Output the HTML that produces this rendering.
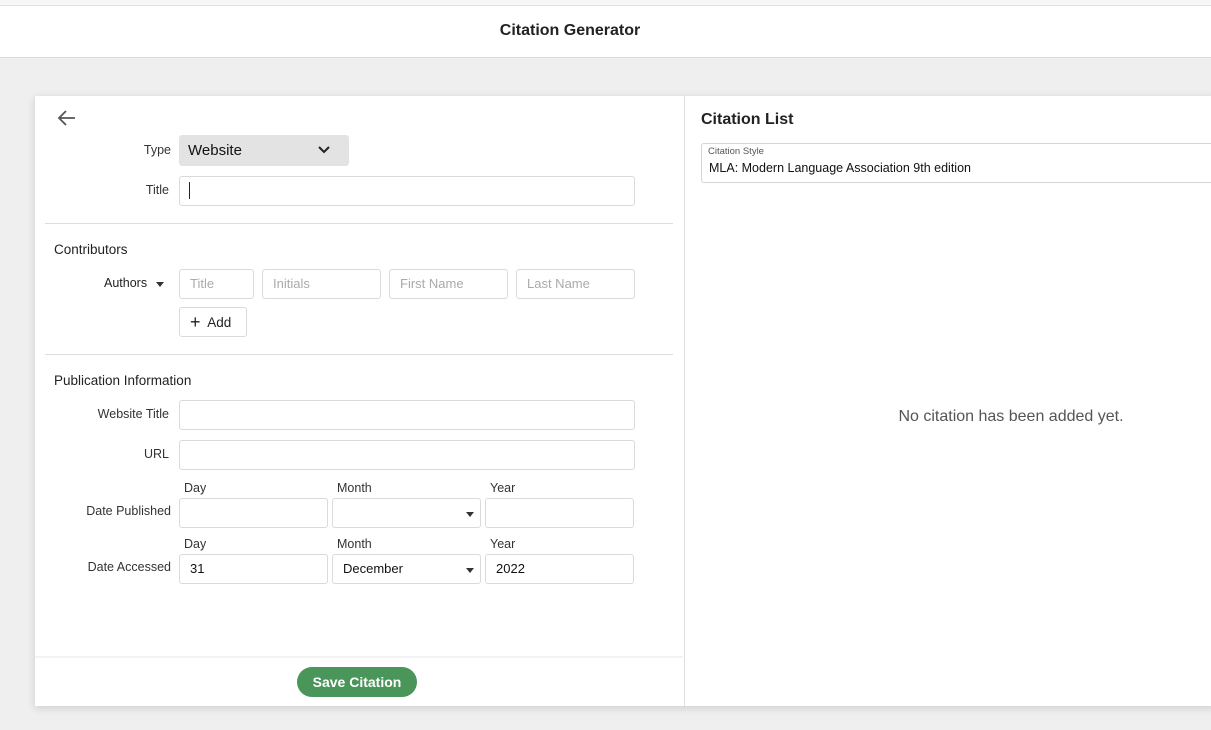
<!DOCTYPE html>
<html><head><style>
*{box-sizing:border-box;margin:0;padding:0}
body{width:1211px;height:730px;overflow:hidden;background:#efefef;font-family:"Liberation Sans",sans-serif;color:#222;position:relative}
.a{position:absolute}
.hdr{left:0;top:0;width:1211px;height:58px;background:#fff;border-top:5px solid #f7f7f7;border-bottom:1px solid #dcdcdc}
.hdr::before{content:"";position:absolute;left:0;top:0;width:100%;height:1px;background:#e2e2e2}
.inp{border:1px solid #dadada;border-radius:3px;background:#fff;height:30px;font-size:13px;color:#aaa;padding:0 10px;line-height:28px}
.lbl{font-size:12.5px;color:#333;text-align:right}
.sm{font-size:12.5px;color:#333}
.hr{height:1px;background:#ddd}
.tri{width:0;height:0;border-left:4px solid transparent;border-right:4px solid transparent;border-top:5px solid #333}
</style></head><body>
<div class="a hdr"></div>
<div class="a" style="left:0;top:22px;width:1140px;text-align:center;font-weight:bold;font-size:16px;color:#222">Citation Generator</div>

<div class="a" style="left:35px;top:96px;width:1180px;height:610px;background:#fff;box-shadow:0 2px 8px rgba(0,0,0,.15)"></div>
<div class="a" style="left:684px;top:96px;width:1px;height:610px;background:#e0e0e0"></div>
<div class="a" style="left:35px;top:656px;width:648px;height:2px;background:#f3f3f3"></div>

<svg class="a" style="left:57px;top:109px" width="20" height="18" viewBox="0 0 20 18"><path d="M18 9H3M9 2L2 9l7 7" fill="none" stroke="#555" stroke-width="1.8"/></svg>

<div class="a lbl" style="left:100px;top:143px;width:71px">Type</div>
<div class="a" style="left:179px;top:135px;width:170px;height:31px;background:#e3e3e3;border-radius:3px;font-size:15px;line-height:31px;padding-left:9px;color:#111">Website</div>
<svg class="a" style="left:317px;top:145px" width="14" height="10" viewBox="0 0 14 10"><path d="M2 2l5 5 5-5" fill="none" stroke="#222" stroke-width="2"/></svg>

<div class="a lbl" style="left:100px;top:183px;width:69px">Title</div>
<div class="a inp" style="left:179px;top:176px;width:456px"></div>
<div class="a" style="left:189px;top:182px;width:1px;height:17px;background:#222"></div>

<div class="a hr" style="left:45px;top:223px;width:628px"></div>
<div class="a" style="left:54px;top:242px;font-size:13.5px;color:#222">Contributors</div>
<div class="a sm" style="left:104px;top:276px;color:#222">Authors</div>
<div class="a tri" style="left:156px;top:282px"></div>
<div class="a inp" style="left:179px;top:269px;width:75px">Title</div>
<div class="a inp" style="left:262px;top:269px;width:119px">Initials</div>
<div class="a inp" style="left:389px;top:269px;width:119px">First Name</div>
<div class="a inp" style="left:516px;top:269px;width:119px">Last Name</div>
<div class="a inp" style="left:179px;top:307px;width:68px;color:#222;font-size:13.5px;padding-left:10px"><span style="font-size:18px;vertical-align:-1px">+</span>&nbsp; Add</div>

<div class="a hr" style="left:45px;top:354px;width:628px"></div>
<div class="a" style="left:54px;top:373px;font-size:13.5px;color:#222">Publication Information</div>
<div class="a lbl" style="left:60px;top:407px;width:109px">Website Title</div>
<div class="a inp" style="left:179px;top:400px;width:456px"></div>
<div class="a lbl" style="left:60px;top:447px;width:109px">URL</div>
<div class="a inp" style="left:179px;top:440px;width:456px"></div>

<div class="a sm" style="left:184px;top:481px">Day</div>
<div class="a sm" style="left:337px;top:481px">Month</div>
<div class="a sm" style="left:490px;top:481px">Year</div>
<div class="a lbl" style="left:60px;top:504px;width:111px">Date Published</div>
<div class="a inp" style="left:179px;top:498px;width:149px"></div>
<div class="a inp" style="left:332px;top:498px;width:149px"></div>
<div class="a tri" style="left:466px;top:512px"></div>
<div class="a inp" style="left:485px;top:498px;width:149px"></div>

<div class="a sm" style="left:184px;top:537px">Day</div>
<div class="a sm" style="left:337px;top:537px">Month</div>
<div class="a sm" style="left:490px;top:537px">Year</div>
<div class="a lbl" style="left:60px;top:560px;width:111px">Date Accessed</div>
<div class="a inp" style="left:179px;top:554px;width:149px;color:#111">31</div>
<div class="a inp" style="left:332px;top:554px;width:149px;color:#111">December</div>
<div class="a tri" style="left:466px;top:568px"></div>
<div class="a inp" style="left:485px;top:554px;width:149px;color:#111">2022</div>

<div class="a" style="left:297px;top:667px;width:120px;height:30px;border-radius:15px;background:#4a9559;color:#fff;font-weight:bold;font-size:14px;text-align:center;line-height:30px">Save Citation</div>

<div class="a" style="left:701px;top:111px;font-weight:bold;font-size:16px;color:#222">Citation List</div>
<div class="a" style="left:701px;top:143px;width:520px;height:40px;border:1px solid #d5d5d5;border-radius:3px"></div>
<div class="a" style="left:708px;top:146px;font-size:9.5px;color:#555">Citation Style</div>
<div class="a" style="left:709px;top:161px;font-size:12.5px;color:#111">MLA: Modern Language Association 9th edition</div>
<div class="a" style="left:811px;top:408px;width:400px;text-align:center;font-size:16px;color:#555">No citation has been added yet.</div>
</body></html>
